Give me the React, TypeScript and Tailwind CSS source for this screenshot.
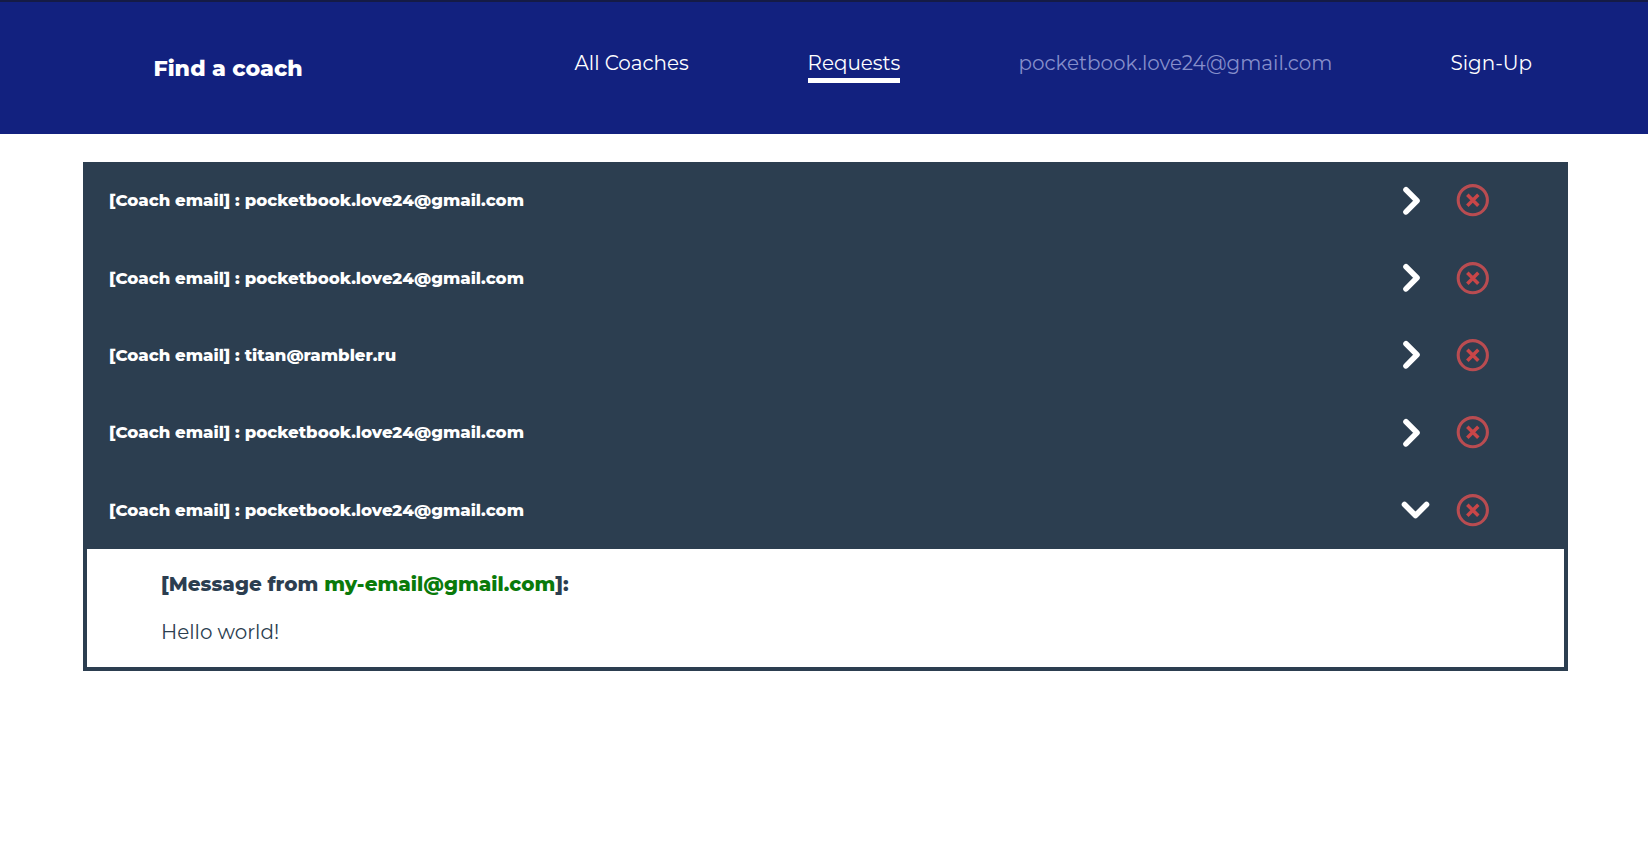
const requests = [
  { email: "pocketbook.love24@gmail.com", open: false },
  { email: "pocketbook.love24@gmail.com", open: false },
  { email: "titan@rambler.ru", open: false },
  { email: "pocketbook.love24@gmail.com", open: false },
  { email: "pocketbook.love24@gmail.com", open: true },
];

function Chevron({ open }: { open: boolean }) {
  return (
    <svg
      viewBox="0 0 30 32"
      className="h-8 w-[30px]"
      fill="none"
      stroke="currentColor"
      strokeWidth="5.6"
      strokeLinecap="round"
      strokeLinejoin="round"
    >
      <path d={open ? "M3.5 10.5 14.5 21.5 25.5 10.5" : "M5 4.7 16 15.8 5 26.9"} />
    </svg>
  );
}

function RemoveIcon() {
  return (
    <svg viewBox="0 0 33 33" className="size-[33px]" fill="none">
      <circle cx="16.8" cy="16.2" r="14.6" stroke="#b94c51" strokeWidth="3.1" />
      <path d="M11.3 10.7 22.3 21.7M22.3 10.7 11.3 21.7" stroke="#c94648" strokeWidth="3.5" />
    </svg>
  );
}

function Header() {
  return (
    <header className="flex h-[134px] items-start border-t-2 border-[#151b46] bg-[#12217f] pl-[153.5px] text-white">
      <h1 className="mt-[50px] w-[421px] text-[22.1px] leading-[33px] font-extrabold whitespace-nowrap">
        Find a coach
      </h1>
      <nav className="mt-[47px] flex text-[19.92px] leading-7 whitespace-nowrap">
        <a className="w-[233px]">All Coaches</a>
        <a className="w-[211px]">
          <span className="inline-block h-[33.5px] border-b-[5px] border-white">Requests</span>
        </a>
        <a className="w-[432px] text-[#868fcb]">pocketbook.love24@gmail.com</a>
        <a>Sign-Up</a>
      </nav>
    </header>
  );
}

export default function App() {
  return (
    <div className="min-h-[861px] bg-white font-['Montserrat','Inter',sans-serif]">
      <Header />
      <main className="mt-7 ml-[82.5px] w-[1485px] border-4 border-[#2c3e50] bg-white text-[#2c3e50]">
        <ul className="-mt-1 bg-[#2c3e50] text-white">
          {requests.map((request, index) => (
            <li key={index} className="flex h-[77.35px] items-center pl-[22.5px]">
              <span className="w-[1292px] text-[16.6px] font-extrabold whitespace-nowrap">
                [Coach email] : {request.email}
              </span>
              <span className="w-[55px]">
                <Chevron open={request.open} />
              </span>
              <RemoveIcon />
            </li>
          ))}
        </ul>
        <section className="h-[118px] pt-[19px] pl-[74.5px] text-[19.92px] leading-8">
          <h2 className="font-extrabold">
            [Message from <span className="text-[#0a7a0a]">my-email@gmail.com</span>]:
          </h2>
          <p className="mt-4">Hello world!</p>
        </section>
      </main>
    </div>
  );
}
